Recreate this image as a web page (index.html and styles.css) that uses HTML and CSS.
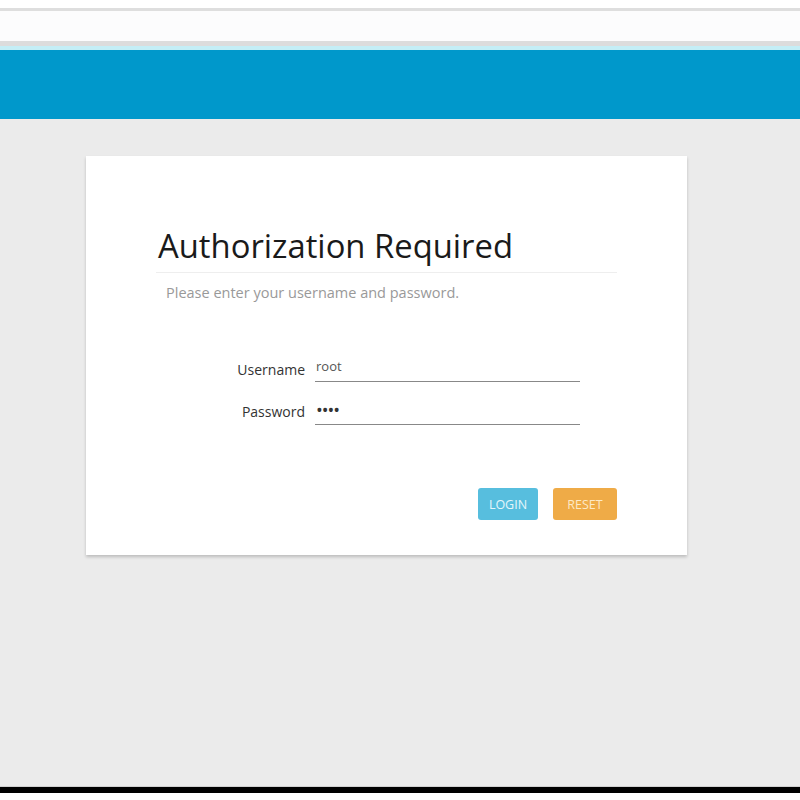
FILE: index.html
```html
<!DOCTYPE html>
<html lang="en">
<head>
    <meta charset="UTF-8">
    <meta name="viewport" content="width=device-width, initial-scale=1.0">
    <title>Authorization Required</title>
    <link rel="stylesheet" href="styles.css">
</head>
<body>
    <div class="topbar"></div>
    <header class="header"></header>

    <main class="content">
        <form class="card" onsubmit="return false">
            <h2 class="title">Authorization Required</h2>
            <p class="hint">Please enter your username and password.</p>

            <div class="fields">
                <div class="field">
                    <label for="username">Username</label>
                    <input type="text" id="username" value="root">
                </div>
                <div class="field">
                    <label for="password">Password</label>
                    <input type="password" id="password" value="root">
                </div>
            </div>

            <div class="actions">
                <button class="btn btn-login" type="submit">LOGIN</button>
                <button class="btn btn-reset" type="reset">RESET</button>
            </div>
        </form>
    </main>

    <div class="footer-bar"></div>
</body>
</html>
```

FILE: styles.css
```css
:root {
    font-family: "Open Sans", "Noto Sans", sans-serif;
    background: #fff;
    color: #222;
}

body {
    margin: 0;
    height: 800px;
    display: flex;
    flex-direction: column;
    background: #fff;
}

.topbar {
    height: 30px;
    margin-top: 8px;
    background: #fcfcfd;
    border-top: 3px solid #dedede;
    border-bottom: 5px solid #dcdcdc;
}

.header {
    height: 69px;
    background: #0098cb;
    border-top: 4px solid #c4eef6;
}

.content {
    flex: 1;
    padding: 37px 0 0 86px;
    background: #ebebeb;
}

.card {
    width: 601px;
    height: 399px;
    box-sizing: border-box;
    background: #fff;
    box-shadow: 0 2px 3px rgba(0, 0, 0, 0.2);
    padding: 70px 70px 0 70px;
}

.title {
    margin: 0;
    font-size: 32.8px;
    font-weight: 400;
    line-height: 40px;
    color: #1a1a1a;
    padding: 0 0 6px 2px;
    border-bottom: 1px solid #eee;
}

.hint {
    margin: 10px 0 0 10px;
    font-size: 14.5px;
    color: #999;
}

.fields {
    margin-top: 55px;
    display: flex;
    flex-direction: column;
    gap: 16px;
}

.field {
    display: flex;
    align-items: center;
    gap: 10px;
}

.field label {
    width: 149px;
    text-align: right;
    font-size: 14px;
    color: #333;
}

.field input {
    width: 262px;
    border: none;
    border-bottom: 1px solid #888;
    padding: 0 2px 6px 1px;
    font-family: inherit;
    font-size: 13px;
    color: #555;
    background: transparent;
    outline: none;
}

#password {
    font-size: 18px;
    letter-spacing: -1px;
    color: #333;
    padding-bottom: 2px;
}

.actions {
    margin-top: 63px;
    display: flex;
    justify-content: flex-end;
    gap: 15px;
}

.btn {
    height: 32px;
    border: none;
    border-radius: 3px;
    color: #fff;
    font-family: inherit;
    font-size: 12.5px;
    padding: 0;
    cursor: pointer;
}

.btn-login {
    width: 60px;
    background: #57bede;
    color: #e4f6fb;
}

.btn-reset {
    width: 64px;
    background: #efab47;
    color: #fde9c6;
}

.footer-bar {
    height: 6px;
    margin-bottom: 7px;
    background: #000;
    border-top: 1px solid #d0d0d0;
}
```
